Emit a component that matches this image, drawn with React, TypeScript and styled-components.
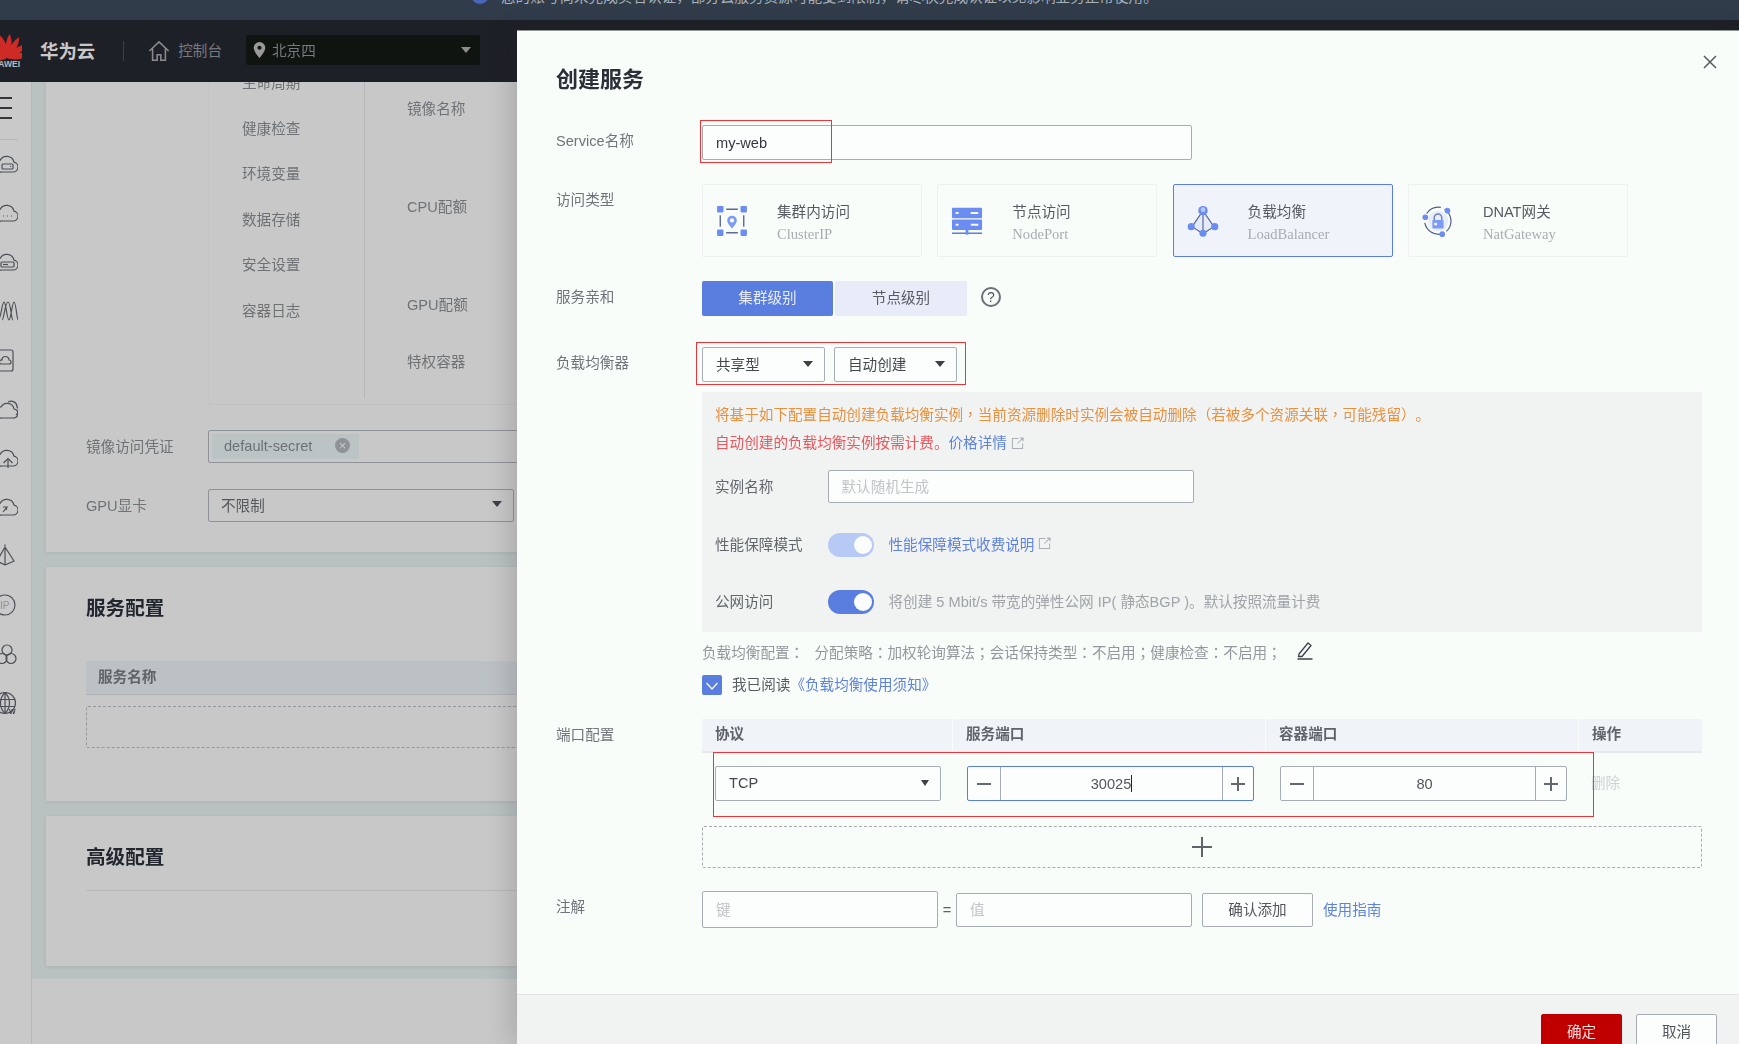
import React from 'react'
import styled, { createGlobalStyle } from 'styled-components'

const PRIMARY = '#5a7edf'
const LINK = '#5f82e0'
const BORDER = '#a8adb5'

const GlobalStyle = createGlobalStyle`
  html, body { margin: 0; padding: 0; background: #c8c8c8; }
  * { box-sizing: border-box; }
  body {
    font-family: "Liberation Sans", "Noto Sans CJK SC", sans-serif;
    font-size: 14.6px;
    text-spacing-trim: space-all;
  }
`

const navItems = ['生命周期', '健康检查', '环境变量', '数据存储', '安全设置', '容器日志']

const accessTypes = [
  { title: '集群内访问', sub: 'ClusterIP', icon: 'cluster' },
  { title: '节点访问', sub: 'NodePort', icon: 'node' },
  { title: '负载均衡', sub: 'LoadBalancer', icon: 'lb', active: true },
  { title: 'DNAT网关', sub: 'NatGateway', icon: 'nat' },
]

const Cloud = 'M8 20h11a5 5 0 0 0 1-9.9A7.5 7.5 0 0 0 6 8.5 5.8 5.8 0 0 0 8 20z'

const sideIcons: React.ReactNode[] = [
  <><path d={Cloud} /><rect x="8" y="12" width="11" height="5" rx="1" /><path d="M16 14.500h1" /></>,
  <><path d={Cloud} /><path d="M9 15h1M13 15h1M17 15h1" /></>,
  <><path d={Cloud} /><rect x="7" y="12" width="13" height="5" rx="1" /><path d="M9 14.500h5" /></>,
  <path d="M4 21C7 21 8 3 10 3s3 18 5 18 3-18 5-18 3 18 4 18M8 21C10 21 11 3 14 3S17 21 19 21" />,
  <><rect x="0" y="2" width="19" height="21" rx="2" /><path d="M7 16h8a2 2 0 0 0 0-4 3.500 3.500 0 0 0-7 0 2 2 0 0 0-1 4z" /></>,
  <><path d="M8 21h11a4.500 4.500 0 0 0 1-9A7 7 0 0 0 7 10a5.500 5.500 0 0 0 1 11z" /><path d="M14 5c4-2 9 0 9 5 2 1 2 6-1 8" /></>,
  <><path d={Cloud} /><path d="M14 22v-8M9.500 17l4.500-4.500 4.500 4.500" /></>,
  <><path d={Cloud} /><path d="M9 17l4-5h-4M13 12l-1 3" /></>,
  <path d="M11 3v18M11 3L3 17l8 4M11 3l9 14-9 4M11 .5v2" />,
  <><circle cx="11" cy="12" r="10" /><text x="6" y="16" fontSize="10" stroke="none" fill="#8d9196">IP</text></>,
  <><circle cx="13" cy="8" r="5" /><circle cx="8" cy="16.500" r="5" /><circle cx="17" cy="16.500" r="5" /></>,
  <><circle cx="11" cy="12" r="10.500" /><path d="M1 8.500h20M1 15.500h20M11 1.500v21M11 1.500c-6 6-6 15 0 21M11 1.500c6 6 6 15 0 21" /><text x="15" y="23" fontSize="7" fontWeight="700" stroke="none" fill="#3f444a">W</text></>,
]

// the reference centres these marks in their cell, which the SC face does not
const punct = (text: string) =>
  text.split(/([，：；])/).map((part, i) => (i % 2 ? <Punct key={i}>{part}</Punct> : part))

const AccessIcon: React.FC<{ kind: string }> = ({ kind }) => {
  if (kind === 'cluster') {
    return (
      <IconSvg viewBox="0 0 30 30">
        <g fill="#6b8df2">
          <rect x="1" y="1" width="6" height="6" rx="1" />
          <rect x="23" y="1" width="6" height="6" rx="1" />
          <rect x="1" y="23" width="6" height="6" rx="1" />
          <rect x="23" y="23" width="6" height="6" rx="1" />
        </g>
        <path d="M9.500 4h11M9.500 26h11M4 9.500v11M26 9.500v11" stroke="#5b6b94" strokeWidth="1.300" fill="none" />
        <path d="M15 22c-3-3.500-4.500-5.500-4.500-7.500a4.500 4.500 0 0 1 9 0c0 2-1.500 4-4.500 7.500z" fill="#7d9bf5" />
        <circle cx="15" cy="14.500" r="2" fill="#f8fbfa" />
      </IconSvg>
    )
  }
  if (kind === 'node') {
    return (
      <IconSvg viewBox="0 0 34 30">
        <rect x="1" y="1" width="32" height="11" rx="1" fill="#6b8df2" />
        <rect x="1" y="13.500" width="32" height="11" rx="1" fill="#6b8df2" />
        <path d="M5 6.500h3M5 19h3M21 6.500h8M21 19h8" stroke="#f6f9fb" strokeWidth="2" />
        <path d="M1 28h32" stroke="#5f7fd8" strokeWidth="1.600" />
        <rect x="15.500" y="24" width="3" height="5.500" fill="#6b8df2" />
      </IconSvg>
    )
  }
  if (kind === 'lb') {
    return (
      <IconSvg viewBox="0 0 34 34">
        <path d="M17 5L5 23l12 8 12-8z" fill="#e4eafb" />
        <path d="M17 6L5.500 23 17 30.500 28.500 23zM17 6v24" stroke="#56648c" strokeWidth="1.200" fill="none" />
        <circle cx="17" cy="6" r="5" fill="#6b8df2" />
        <circle cx="17" cy="5" r="2.500" fill="#b8c9fb" />
        <circle cx="4.500" cy="23" r="3.800" fill="#6b8df2" />
        <circle cx="29.500" cy="23" r="3.800" fill="#6b8df2" />
        <circle cx="17" cy="30" r="3.800" fill="#6b8df2" />
      </IconSvg>
    )
  }
  return (
    <IconSvg viewBox="0 0 34 34">
      <circle cx="17" cy="17" r="11" fill="#e8edfb" />
      <path d="M24 4.500A15 15 0 0 1 26 28M20 31A15 15 0 0 1 3 19M5 9A15 15 0 0 1 20 2.500" stroke="#4f5f8c" strokeWidth="1.300" fill="none" />
      <circle cx="27" cy="6" r="3" fill="#6b8df2" />
      <circle cx="3.500" cy="13" r="3" fill="#6b8df2" />
      <circle cx="21.500" cy="31" r="3" fill="#6b8df2" />
      <path d="M13 16v-2.500a4 4 0 0 1 8 0V16" stroke="#6b7fb8" strokeWidth="1.500" fill="none" />
      <rect x="11" y="16" width="12" height="9" rx="1" fill="#7d9bf5" />
      <rect x="13" y="19" width="3" height="2.500" fill="#f4f7fd" />
    </IconSvg>
  )
}

const ExternalIcon = () => (
  <ExtSvg viewBox="0 0 14 14">
    <path d="M8 1.500H1.500v11h11V7M7 7l6-6M9.500 1H13v3.500" />
  </ExtSvg>
)

const Stepper: React.FC<{ value: string; focused?: boolean; minusWidth: number; plusWidth: number }> = ({
  value,
  focused,
  minusWidth,
  plusWidth,
}) => (
  <StepperBox $focused={focused}>
    <StepButton $width={minusWidth} $side="left">
      <StepMark />
    </StepButton>
    <StepValue>
      {value}
      {focused && <TextCaret />}
    </StepValue>
    <StepButton $width={plusWidth} $side="right">
      <StepMark $plus />
    </StepButton>
  </StepperBox>
)

export default function App() {
  return (
    <Page>
      <GlobalStyle />
      <NoticeBar>
        <NoticeInner>
          <NoticeDot />
          <NoticeText>您的账号尚未完成实名认证，部分云服务资源可能受到限制，请尽快完成认证以免影响业务正常使用。</NoticeText>
        </NoticeInner>
        <NoticeClose>×</NoticeClose>
      </NoticeBar>

      <TopBar>
        <LogoSvg viewBox="0 0 22 36">
          <g fill="#cf2b26">
            {[-86, -60, -36, -12, 12, 36, 60, 86].map((deg) => (
              <path key={deg} d="M0 0C-4-6-5.500-15-2.500-24 2.500-18 3.500-7 0 0z" transform={`translate(7 24) rotate(${deg})`} />
            ))}
          </g>
          <text x="-14" y="33" fontSize="8.500" fontWeight="700" fill="#b9b9b9">HUAWEI</text>
        </LogoSvg>
        <BrandName>华为云</BrandName>
        <TopDivider />
        <HomeSvg viewBox="0 0 24 24">
          <path d="M1.500 12L12 2l10.500 10M5 9.500V22h5v-6h4v6h5V9.500" />
        </HomeSvg>
        <ConsoleLink>控制台</ConsoleLink>
        <RegionSelect>
          <PinSvg viewBox="0 0 14 18">
            <path d="M7 0a6.500 6.500 0 0 0-6.500 6.500C.5 11 7 18 7 18s6.500-7 6.500-11.500A6.500 6.500 0 0 0 7 0z" fill="#9a9a9a" />
            <circle cx="7" cy="6.500" r="2.300" fill="#101410" />
          </PinSvg>
          <RegionName>北京四</RegionName>
          <Caret $color="#8d8d8d" />
        </RegionSelect>
      </TopBar>

      <Main>
        <Sidebar>
          <MenuIcon>
            <span />
            <span />
            <span />
          </MenuIcon>
          <SideDivider />
          <SideIcons>
            {sideIcons.map((icon, i) => (
              <SideSvg key={i} viewBox="6 0 18 24">
                {icon}
              </SideSvg>
            ))}
          </SideIcons>
        </Sidebar>

        <Content>
          <Gutter>
            <Card $height={470}>
              <SpecGrid>
                <SpecNav>
                  {navItems.map((item) => (
                    <SpecNavItem key={item}>{item}</SpecNavItem>
                  ))}
                </SpecNav>
                <SpecFields>
                  <SpecField $top={17}>镜像名称</SpecField>
                  <SpecField $top={78}>CPU配额</SpecField>
                  <SpecField $top={78}>GPU配额</SpecField>
                  <SpecField $top={37}>特权容器</SpecField>
                </SpecFields>
              </SpecGrid>
              <BackRow $top={25}>
                <BackLabel>镜像访问凭证</BackLabel>
                <SecretBox>
                  <SecretTag>
                    default-secret
                    <SecretClose>×</SecretClose>
                  </SecretTag>
                </SecretBox>
              </BackRow>
              <BackRow $top={26}>
                <BackLabel>GPU显卡</BackLabel>
                <BackSelect>
                  不限制
                  <Caret $color="#3d4145" />
                </BackSelect>
              </BackRow>
            </Card>
            <Card $height={234}>
              <CardHeading $top={27}>服务配置</CardHeading>
              <BackTableHead>服务名称</BackTableHead>
              <BackEmpty />
            </Card>
            <Card $height={150}>
              <CardHeading $top={27}>高级配置</CardHeading>
              <HeadingRule />
            </Card>
          </Gutter>
        </Content>
      </Main>

      <Drawer>
        <CloseButton viewBox="0 0 14 14">
          <path d="M1 1l12 12M13 1L1 13" />
        </CloseButton>
        <DrawerBody>
          <DrawerTitle>创建服务</DrawerTitle>

          <FormRow $top={30}>
            <FormLabel>Service名称</FormLabel>
            <Marked>
              <TextInput $width={490} $height={35} readOnly value="my-web" />
              <RedMark $left={-2} $top={-5} $width={132} $height={43} />
            </Marked>
          </FormRow>

          <FormRow $top={24}>
            <FormLabel>访问类型</FormLabel>
            <AccessCards>
              {accessTypes.map((item) => (
                <AccessCard key={item.sub} $active={item.active}>
                  <AccessIconBox>
                    <AccessIcon kind={item.icon} />
                  </AccessIconBox>
                  <AccessText>
                    <AccessTitle>{item.title}</AccessTitle>
                    <AccessSub>{item.sub}</AccessSub>
                  </AccessText>
                </AccessCard>
              ))}
            </AccessCards>
          </FormRow>

          <FormRow $top={24}>
            <FormLabel>服务亲和</FormLabel>
            <InlineRow>
              <Segment $active $width={131}>集群级别</Segment>
              <Segment $width={132}>节点级别</Segment>
              <HelpIcon>?</HelpIcon>
            </InlineRow>
          </FormRow>

          <FormRow $top={31}>
            <FormLabel>负载均衡器</FormLabel>
            <Marked>
              <SelectPair>
                <SelectBox $width={123} $height={35}>
                  共享型
                  <Caret $color="#3d4145" />
                </SelectBox>
                <SelectBox $width={123} $height={35}>
                  自动创建
                  <Caret $color="#3d4145" />
                </SelectBox>
              </SelectPair>
              <RedMark $left={-6} $top={-5} $width={270} $height={43} />
            </Marked>
          </FormRow>

          <ConfigPanel>
            <WarnLine $color="#e8903f">
              <span>{punct('将基于如下配置自动创建负载均衡实例，当前资源删除时实例会被自动删除（若被多个资源关联，可能残留）。')}</span>
            </WarnLine>
            <WarnLine $color="#e8585f" $top={8}>
              <span>自动创建的负载均衡实例按需计费。</span>
              <LinkText>价格详情</LinkText>
              <ExternalIcon />
            </WarnLine>
            <PanelRow $top={17}>
              <PanelLabel>实例名称</PanelLabel>
              <TextInput $width={366} $height={33} readOnly placeholder="默认随机生成" />
            </PanelRow>
            <PanelRow $top={30}>
              <PanelLabel>性能保障模式</PanelLabel>
              <Toggle $disabled />
              <PanelNote>
                <LinkText>性能保障模式收费说明</LinkText>
                <ExternalIcon />
              </PanelNote>
            </PanelRow>
            <PanelRow $top={33}>
              <PanelLabel>公网访问</PanelLabel>
              <Toggle />
              <PanelNote>将创建 5 Mbit/s 带宽的弹性公网 IP( 静态BGP )。默认按照流量计费</PanelNote>
            </PanelRow>
          </ConfigPanel>

          <FormRow $top={10}>
            <span />
            <ConfigSummary>
              <SummaryLead>{punct('负载均衡配置：')}</SummaryLead>
              <span>{punct('分配策略：加权轮询算法；会话保持类型：不启用；健康检查：不启用；')}</span>
              <EditSvg viewBox="0 0 20 20">
                <path d="M4 14l9-11 3 2.500-9 11-3.500 0zM2.500 19h15" />
              </EditSvg>
            </ConfigSummary>
          </FormRow>

          <FormRow $top={13}>
            <span />
            <AgreeRow>
              <CheckBox viewBox="0 0 20 20">
                <rect width="20" height="20" rx="2" fill={PRIMARY} />
                <path d="M4.500 8l5.500 6 5.500-6" fill="none" stroke="#fff" strokeWidth="1.200" />
              </CheckBox>
              <AgreeText>
                我已阅读
                <LinkText>《负载均衡使用须知》</LinkText>
              </AgreeText>
            </AgreeRow>
          </FormRow>

          <FormRow $top={24}>
            <FormLabel>端口配置</FormLabel>
            <div>
              <PortHead>
                <PortHeadCell $width={250}>协议</PortHeadCell>
                <PortHeadCell $width={312}>服务端口</PortHeadCell>
                <PortHeadCell $width={312}>容器端口</PortHeadCell>
                <PortHeadCell $width={123}>操作</PortHeadCell>
              </PortHead>
              <PortRow>
                <SelectBox $width={226} $height={35}>
                  TCP
                  <Caret $color="#3d4145" $small />
                </SelectBox>
                <Stepper value="30025" focused minusWidth={33} plusWidth={31} />
                <Stepper value="80" minusWidth={33} plusWidth={31} />
                <DeleteText>删除</DeleteText>
                <RedMark $left={11} $top={-1} $width={881} $height={65} />
              </PortRow>
              <AddPortRow>
                <AddMark />
              </AddPortRow>
            </div>
          </FormRow>

          <FormRow $top={23}>
            <FormLabel>注解</FormLabel>
            <NoteRow>
              <TextInput $width={236} $height={37} readOnly placeholder="键" />
              <EqualSign>=</EqualSign>
              <TextInput $width={236} $height={34} readOnly placeholder="值" />
              <PlainButton>确认添加</PlainButton>
              <NoteLink>使用指南</NoteLink>
            </NoteRow>
          </FormRow>
        </DrawerBody>

        <DrawerFooter>
          <FooterButton $primary>确定</FooterButton>
          <FooterButton>取消</FooterButton>
        </DrawerFooter>
      </Drawer>
    </Page>
  )
}

const Punct = styled.span`
  font-family: "Noto Sans CJK TC", sans-serif;
`

const Page = styled.div`
  position: relative;
  width: 1739px;
  height: 1044px;
  overflow: hidden;
  display: flex;
  flex-direction: column;
  filter: blur(0.5px);
`

const NoticeBar = styled.div`
  height: 20px;
  flex: none;
  background: #303c4a;
  display: flex;
  justify-content: space-between;
  overflow: hidden;
`
const NoticeInner = styled.div`
  margin: -14px 0 0 471px;
  height: 18px;
  display: flex;
  align-items: center;
  gap: 12px;
`
const NoticeDot = styled.span`
  width: 18px;
  height: 18px;
  border-radius: 50%;
  background: #4a66bd;
`
const NoticeText = styled.span`
  color: #a9b0b8;
  font-size: 14.6px;
`
const NoticeClose = styled.span`
  margin: -14px 22px 0 0;
  color: #c0c5ca;
  font-size: 20px;
  line-height: 18px;
`

const TopBar = styled.header`
  height: 62px;
  flex: none;
  background: #1e2028;
  display: flex;
  align-items: center;
`
const LogoSvg = styled.svg`
  width: 22px;
  height: 36px;
  margin-top: 2px;
  flex: none;
`
const BrandName = styled.span`
  margin-left: 18px;
  padding-bottom: 2px;
  color: #c9c9c9;
  font-size: 18.400px;
  font-weight: 700;
`
const TopDivider = styled.span`
  width: 1px;
  height: 20px;
  margin-left: 28px;
  background: #3c3f46;
`
const HomeSvg = styled.svg`
  width: 22px;
  height: 22px;
  margin-left: 24px;
  fill: none;
  stroke: #8b8b8b;
  stroke-width: 1.700;
`
const ConsoleLink = styled.span`
  margin-left: 8px;
  padding-bottom: 3px;
  color: #777a7e;
`
const RegionSelect = styled.div`
  width: 234px;
  height: 30px;
  margin: 0 0 2px 24px;
  padding: 0 9px 0 7px;
  background: #101410;
  border-radius: 2px;
  display: flex;
  align-items: center;
  justify-content: flex-start;
`
const PinSvg = styled.svg`
  width: 13px;
  height: 16px;
`
const RegionName = styled.span`
  margin-left: 6px;
  padding-bottom: 2px;
  flex: 1;
  color: #777a7e;
`

const Caret = styled.span<{ $color: string; $small?: boolean }>`
  width: 0;
  height: 0;
  flex: none;
  border-left: ${(p) => (p.$small ? 4 : 5)}px solid transparent;
  border-right: ${(p) => (p.$small ? 4 : 5)}px solid transparent;
  border-top: 6px solid ${(p) => p.$color};
`

const Main = styled.div`
  flex: 1;
  min-height: 0;
  display: flex;
`
const Sidebar = styled.aside`
  width: 32px;
  flex: none;
  background: #c9c9c9;
  border-right: 1px solid #b4b8b8;
`
const MenuIcon = styled.div`
  height: 22px;
  margin-top: 15px;
  display: flex;
  flex-direction: column;
  justify-content: space-between;

  span {
    display: block;
    width: 12px;
    height: 2px;
    background: #33373d;
  }
`
const SideDivider = styled.div`
  width: 18px;
  height: 1px;
  margin-top: 20px;
  background: #b9b9b9;
`
const SideIcons = styled.div`
  margin-top: 12px;
  display: flex;
  flex-direction: column;
  gap: 25px;
`
const SideSvg = styled.svg`
  width: 18px;
  height: 24px;
  fill: none;
  stroke: #4c5056;
  stroke-width: 1.200;
`

const Content = styled.main`
  flex: 1;
  min-width: 0;
  background: #c8c8c8;
`
const Gutter = styled.div`
  height: 897px;
  padding-left: 14px;
  background: #b9c1c1;
  display: flex;
  flex-direction: column;
  gap: 15px;
`
const Card = styled.section<{ $height: number }>`
  height: ${(p) => p.$height}px;
  flex: none;
  background: #c8c8c8;
  box-shadow: 0 1px 4px rgba(0, 0, 0, 0.08);
  padding-left: 40px;
  overflow: hidden;
`
const SpecGrid = styled.div`
  height: 323px;
  margin-left: 122px;
  display: flex;
  border-left: 1px dotted #c0c0c0;
  border-bottom: 1px dotted #bcbcbc;
  overflow: hidden;
`
const SpecNav = styled.div`
  width: 155px;
  height: 316px;
  flex: none;
  margin-top: -21px;
  padding-left: 33px;
`
const SpecNavItem = styled.div`
  height: 45.600px;
  line-height: 45.600px;
  color: #6f7275;
`
const SpecFields = styled.div`
  flex: 1;
  height: 316px;
  padding-left: 42px;
  border-left: 1px solid #b5b7b8;
`
const SpecField = styled.div<{ $top: number }>`
  margin-top: ${(p) => p.$top}px;
  line-height: 20px;
  color: #6f7275;
`
const BackRow = styled.div<{ $top: number }>`
  margin-top: ${(p) => p.$top}px;
  display: flex;
  align-items: center;
`
const BackLabel = styled.div`
  width: 122px;
  flex: none;
  padding-bottom: 3px;
  color: #6f7275;
`
const SecretBox = styled.div`
  width: 420px;
  height: 33px;
  flex: none;
  padding: 3px;
  border: 1px solid #8f9297;
  border-radius: 2px;
`
const SecretTag = styled.div`
  width: 147px;
  height: 100%;
  padding: 0 9px 2px 12px;
  background: #bcc3c4;
  border-radius: 2px;
  color: #6d7175;
  display: flex;
  align-items: center;
  justify-content: space-between;
`
const SecretClose = styled.span`
  width: 15px;
  height: 15px;
  border-radius: 50%;
  background: #8f9398;
  color: #c8c8c8;
  font-size: 13px;
  line-height: 15px;
  text-align: center;
`
const BackSelect = styled.div`
  width: 306px;
  height: 33px;
  flex: none;
  padding: 0 11px 3px 12px;
  border: 1px solid #8f9297;
  border-radius: 2px;
  color: #55585c;
  display: flex;
  align-items: center;
  justify-content: space-between;
`
const CardHeading = styled.h2<{ $top: number }>`
  margin: ${(p) => p.$top}px 0 0;
  line-height: 28px;
  font-size: 19.600px;
  font-weight: 700;
  color: #22272f;
`
const BackTableHead = styled.div`
  height: 34px;
  margin-top: 39px;
  padding-left: 12px;
  line-height: 33px;
  background: #bcc1c5;
  border-bottom: 1px solid #afb3b7;
  font-weight: 700;
  color: #5f6368;
`
const BackEmpty = styled.div`
  height: 42px;
  margin-top: 11px;
  border: 1px dashed #94979b;
  border-radius: 2px;
`
const HeadingRule = styled.div`
  height: 1px;
  margin-top: 19px;
  background: #b9b9b9;
`

const Drawer = styled.aside`
  position: absolute;
  left: 517px;
  top: 30px;
  right: 0;
  bottom: 0;
  display: flex;
  flex-direction: column;
  background: #f9fdfa;
  border-top: 1px solid #8e948f;
  box-shadow: -8px 0 22px rgba(40, 30, 40, 0.16);
`
const CloseButton = styled.svg`
  position: absolute;
  top: 24px;
  right: 22px;
  width: 14px;
  height: 14px;
  fill: none;
  stroke: #565b63;
  stroke-width: 1.500;
`
const DrawerBody = styled.div`
  flex: 1;
  min-height: 0;
  padding: 34px 37px 0 39px;
`
const DrawerTitle = styled.h1`
  margin: 0;
  line-height: 30px;
  font-size: 22px;
  font-weight: 700;
  color: #2b3038;
`
const FormRow = styled.div<{ $top: number }>`
  margin-top: ${(p) => p.$top}px;
  display: grid;
  grid-template-columns: 146px 1fr;
`
const FormLabel = styled.div`
  line-height: 32px;
  color: #6f757b;
`
const Marked = styled.div`
  position: relative;
  width: max-content;
`
const RedMark = styled.span<{ $left: number; $top: number; $width: number; $height: number }>`
  position: absolute;
  left: ${(p) => p.$left}px;
  top: ${(p) => p.$top}px;
  width: ${(p) => p.$width}px;
  height: ${(p) => p.$height}px;
  border: 1px solid #ee3438;
  pointer-events: none;
`
const TextInput = styled.input<{ $width: number; $height: number }>`
  width: ${(p) => p.$width}px;
  height: ${(p) => p.$height}px;
  flex: none;
  padding: 0 13px;
  background: #fbfefc;
  border: 1px solid ${BORDER};
  border-radius: 2px;
  outline: none;
  font: inherit;
  color: #34383e;

  &::placeholder {
    color: #c2c5c8;
  }
`
const AccessCards = styled.div`
  display: flex;
  gap: 15.300px;
`
const AccessCard = styled.div<{ $active?: boolean }>`
  width: 220px;
  height: 73px;
  padding-left: 13px;
  display: flex;
  background: ${(p) => (p.$active ? '#f0f3fa' : 'transparent')};
  border: 1px solid ${(p) => (p.$active ? PRIMARY : '#eef1ef')};
  border-radius: 2px;
`
const AccessIconBox = styled.div`
  width: 61px;
  flex: none;
  display: flex;
  align-items: center;
`
const IconSvg = styled.svg`
  width: 32px;
  height: 32px;
`
const AccessText = styled.div`
  padding-top: 17px;
`
const AccessTitle = styled.div`
  line-height: 21px;
  color: #565b62;
`
const AccessSub = styled.div`
  line-height: 22px;
  font-family: "Liberation Serif", serif;
  color: #a9adb1;
`
const InlineRow = styled.div`
  display: flex;
  align-items: center;
`
const Segment = styled.div<{ $active?: boolean; $width: number }>`
  width: ${(p) => p.$width}px;
  height: 35px;
  margin-right: ${(p) => (p.$active ? 2 : 0)}px;
  line-height: 34px;
  text-align: center;
  background: ${(p) => (p.$active ? PRIMARY : '#e8ebf8')};
  color: ${(p) => (p.$active ? '#e6ecfb' : '#575c63')};
  border-radius: 2px;
`
const HelpIcon = styled.span`
  width: 20px;
  height: 20px;
  margin: 0 0 3px 14px;
  border: 2px solid #6b7077;
  border-radius: 50%;
  color: #4f545b;
  font-size: 14px;
  line-height: 16px;
  text-align: center;
`
const SelectPair = styled.div`
  display: flex;
  gap: 9px;
`
const SelectBox = styled.div<{ $width: number; $height: number }>`
  width: ${(p) => p.$width}px;
  height: ${(p) => p.$height}px;
  flex: none;
  padding: 0 11px 2px 13px;
  background: #fbfefc;
  border: 1px solid ${BORDER};
  border-radius: 2px;
  color: #45494f;
  display: flex;
  align-items: center;
  justify-content: space-between;
`
const ConfigPanel = styled.div`
  margin: 10px 0 0 146px;
  padding: 12px 13px 18px;
  height: 240px;
  background: #f0f3f1;
`
const WarnLine = styled.div<{ $color: string; $top?: number }>`
  margin-top: ${(p) => p.$top ?? 0}px;
  line-height: 20px;
  color: ${(p) => p.$color};
  display: flex;
  align-items: center;
`
const LinkText = styled.span`
  color: ${LINK};
`
const ExtSvg = styled.svg`
  width: 13px;
  height: 13px;
  margin-left: 4px;
  fill: none;
  stroke: #abb0b6;
  stroke-width: 1.100;
  flex: none;
`
const PanelRow = styled.div<{ $top: number }>`
  margin-top: ${(p) => p.$top}px;
  display: flex;
  align-items: center;
`
const PanelLabel = styled.div`
  width: 112.500px;
  flex: none;
  padding-bottom: 3px;
  color: #62676d;
`
const Toggle = styled.span<{ $disabled?: boolean }>`
  position: relative;
  width: 46px;
  height: 24px;
  flex: none;
  border-radius: 12px;
  background: ${(p) => (p.$disabled ? '#b7c9f5' : PRIMARY)};

  &::after {
    content: '';
    position: absolute;
    top: 3px;
    right: 2px;
    width: 18px;
    height: 18px;
    border-radius: 50%;
    background: #fbfdfc;
  }
`
const PanelNote = styled.div`
  margin-left: 15px;
  padding-bottom: 3px;
  color: #a0a4a9;
  display: flex;
  align-items: center;
`
const ConfigSummary = styled.div`
  height: 20px;
  line-height: 20px;
  color: #94989d;
  display: flex;
  align-items: center;
`
const SummaryLead = styled.span`
  width: 112.500px;
  flex: none;
`
const EditSvg = styled.svg`
  width: 20px;
  height: 20px;
  margin: -4px 0 0 13px;
  fill: none;
  stroke: #3f4349;
  stroke-width: 1.300;
`
const AgreeRow = styled.div`
  height: 20px;
  color: #575c62;
  display: flex;
  align-items: center;
`
const AgreeText = styled.span`
  padding-bottom: 3px;
`
const CheckBox = styled.svg`
  width: 20px;
  height: 20px;
  margin-right: 10px;
`
const PortHead = styled.div`
  height: 34px;
  display: flex;
  gap: 1px;
  border-bottom: 2px solid #e6eaed;
`
const PortHeadCell = styled.div<{ $width: number }>`
  width: ${(p) => p.$width}px;
  flex: none;
  padding-left: 13px;
  line-height: 30px;
  background: #f0f3f8;
  color: #5f646b;
  font-weight: 700;
`
const PortRow = styled.div`
  position: relative;
  height: 73px;
  padding: 13px 0 0 13px;
  display: flex;
  align-items: flex-start;
  gap: 26px;
`
const StepperBox = styled.div<{ $focused?: boolean }>`
  width: 287px;
  height: 35px;
  flex: none;
  background: #fbfefc;
  border: 1px solid ${(p) => (p.$focused ? PRIMARY : BORDER)};
  border-radius: 2px;
  display: flex;
`
const StepButton = styled.span<{ $width: number; $side: 'left' | 'right' }>`
  width: ${(p) => p.$width}px;
  flex: none;
  display: flex;
  align-items: center;
  justify-content: center;
  border-${(p) => (p.$side === 'left' ? 'right' : 'left')}: 1px solid ${BORDER};
`
const StepMark = styled.span<{ $plus?: boolean }>`
  position: relative;
  width: 14px;
  height: 2px;
  background: #63686e;

  &::after {
    content: '';
    display: ${(p) => (p.$plus ? 'block' : 'none')};
    position: absolute;
    left: 6px;
    top: -6px;
    width: 2px;
    height: 14px;
    background: #63686e;
  }
`
const StepValue = styled.div`
  flex: 1;
  display: flex;
  align-items: center;
  justify-content: center;
  color: #53575d;
`
const TextCaret = styled.span`
  width: 1px;
  height: 17px;
  background: #22262c;
`
const DeleteText = styled.span`
  margin: 5px 0 0 -2px;
  color: #cfd2d4;
`
const AddPortRow = styled.div`
  height: 42px;
  display: flex;
  align-items: center;
  justify-content: center;
  border: 1px dashed #a9adb2;
  border-radius: 2px;
`
const AddMark = styled.span`
  position: relative;
  width: 20px;
  height: 1.500px;
  background: #5f646a;

  &::after {
    content: '';
    position: absolute;
    left: 9.250px;
    top: -9.250px;
    width: 1.500px;
    height: 20px;
    background: #5f646a;
  }
`
const NoteRow = styled.div`
  display: flex;
  align-items: center;
`
const NoteLink = styled(LinkText)`
  padding-bottom: 3px;
`
const EqualSign = styled.span`
  width: 18px;
  flex: none;
  text-align: center;
  color: #5b6066;
`
const PlainButton = styled.button`
  width: 111px;
  height: 34px;
  margin: 0 10px;
  padding: 0 0 2px;
  background: #fbfefc;
  border: 1px solid ${BORDER};
  border-radius: 2px;
  font: inherit;
  color: #53575d;
`
const DrawerFooter = styled.footer`
  height: 50px;
  flex: none;
  padding: 19px 22px 0 0;
  background: #f0f3f1;
  border-top: 1px solid #e0e3e1;
  display: flex;
  justify-content: flex-end;
  gap: 14px;
  overflow: hidden;
`
const FooterButton = styled.button<{ $primary?: boolean }>`
  width: 81px;
  height: 36px;
  flex: none;
  padding: 0 0 3px;
  background: ${(p) => (p.$primary ? '#c00000' : '#fbfefc')};
  border: 1px solid ${(p) => (p.$primary ? '#c00000' : BORDER)};
  border-radius: 2px;
  font: inherit;
  color: ${(p) => (p.$primary ? '#f4dcdc' : '#53575d')};
`
